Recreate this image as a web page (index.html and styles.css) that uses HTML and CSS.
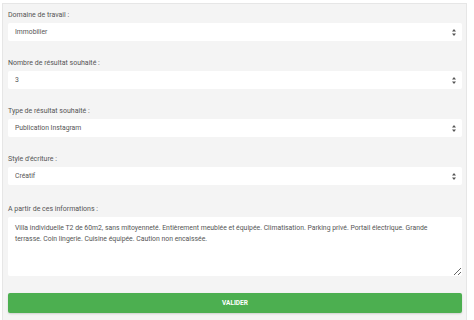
FILE: index.html
```html
<!DOCTYPE html>
<html lang="fr">
<head>
    <meta charset="UTF-8">
    <meta name="viewport" content="width=device-width, initial-scale=1.0">
    <title>Générateur de publication</title>
    <link rel="stylesheet" href="styles.css">
</head>
<body>
    <form class="panel">
        <div class="field">
            <label for="domaine">Domaine de travail :</label>
            <div class="select-wrap">
                <select id="domaine">
                    <option>Immobilier</option>
                </select>
                <svg class="arrows" width="4" height="7" viewBox="0 0 4 7"><path d="M2 0L4 2.6H0z M2 7L0 4.4h4z" fill="#555"/></svg>
            </div>
        </div>
        <div class="field">
            <label for="nombre">Nombre de résultat souhaité :</label>
            <div class="select-wrap">
                <select id="nombre">
                    <option>3</option>
                </select>
                <svg class="arrows" width="4" height="7" viewBox="0 0 4 7"><path d="M2 0L4 2.6H0z M2 7L0 4.4h4z" fill="#555"/></svg>
            </div>
        </div>
        <div class="field">
            <label for="type">Type de résultat souhaité :</label>
            <div class="select-wrap">
                <select id="type">
                    <option>Publication Instagram</option>
                </select>
                <svg class="arrows" width="4" height="7" viewBox="0 0 4 7"><path d="M2 0L4 2.6H0z M2 7L0 4.4h4z" fill="#555"/></svg>
            </div>
        </div>
        <div class="field">
            <label for="style">Style d'écriture :</label>
            <div class="select-wrap">
                <select id="style">
                    <option>Créatif</option>
                </select>
                <svg class="arrows" width="4" height="7" viewBox="0 0 4 7"><path d="M2 0L4 2.6H0z M2 7L0 4.4h4z" fill="#555"/></svg>
            </div>
        </div>
        <div class="field field-text">
            <label for="infos">A partir de ces informations :</label>
            <textarea id="infos">Villa individuelle T2 de 60m2, sans mitoyenneté. Entièrement meublée et équipée. Climatisation. Parking privé. Portail électrique. Grande terrasse. Coin lingerie. Cuisine équipée. Caution non encaissée.</textarea>
        </div>
        <button type="button" class="btn">VALIDER</button>
    </form>
</body>
</html>
```

FILE: styles.css
```css
body {
    font-family: Roboto, 'Liberation Sans', Arial, sans-serif;
    margin: 3px 7px 0 2px;
    background-color: white;
}
.panel {
    background-color: #f4f4f4;
    border: 1px solid #e6e6e6;
    border-bottom: none;
    padding: 5px 4px 20px 5px;
}
.field {
    margin-bottom: 16px;
}
.field-text {
    margin-top: 18px;
    margin-bottom: 17px;
}
label {
    display: block;
    font-size: 7px;
    line-height: 12px;
    color: #555;
    margin-bottom: 2px;
}
.select-wrap {
    position: relative;
}
select {
    appearance: none;
    -webkit-appearance: none;
    display: block;
    width: 100%;
    height: 18px;
    border: none;
    border-radius: 2px;
    background-color: white;
    font-family: inherit;
    font-size: 6.8px;
    color: #555;
    padding: 0 7px;
    outline: none;
}
.arrows {
    position: absolute;
    right: 6px;
    top: 6px;
}
textarea {
    display: block;
    box-sizing: border-box;
    width: 100%;
    height: 59px;
    border: none;
    border-radius: 2px;
    background-color: white;
    font-family: inherit;
    font-size: 6.85px;
    line-height: 11px;
    color: #555;
    padding: 6px 7px;
    resize: vertical;
    outline: none;
}
.btn {
    display: block;
    width: 100%;
    height: 20px;
    border: none;
    border-radius: 2px;
    background-color: #4caf50;
    box-shadow: 0 1px 2px rgba(0,0,0,0.15);
    color: white;
    font-family: inherit;
    font-weight: bold;
    font-size: 6.5px;
    cursor: pointer;
}
```
